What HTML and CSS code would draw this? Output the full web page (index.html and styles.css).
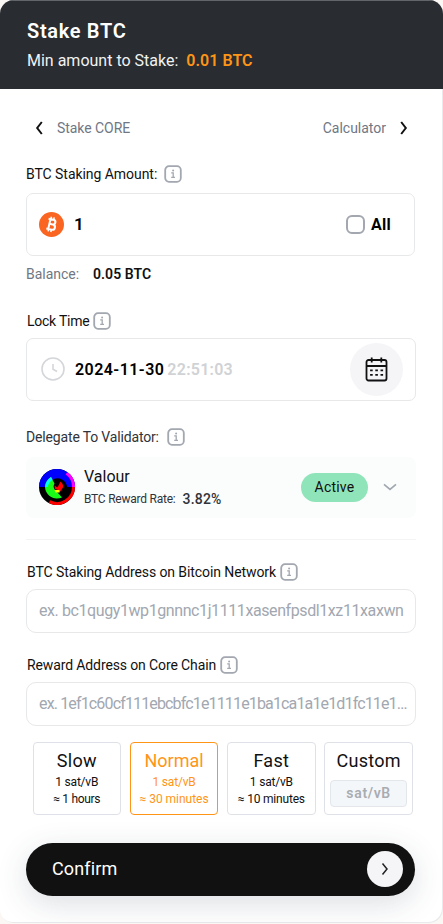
FILE: index.html
```
<!DOCTYPE html>
<html lang="en">
<head>
<meta charset="utf-8">
<title>Stake BTC</title>
<link rel="stylesheet" href="styles.css">
</head>
<body>
<svg class="sprite" aria-hidden="true">
  <symbol id="info" viewBox="0 0 18 18">
    <rect x="1.2" y="1.2" width="15.6" height="15.6" rx="3.8" fill="none" stroke="#a2a7b0" stroke-width="1.8"/>
    <path d="M7.2 7.8H9.2V12.2M7.2 12.3H11" fill="none" stroke="#a2a7b0" stroke-width="1.3"/>
    <circle cx="9.1" cy="5.4" r="1" fill="#a2a7b0"/>
  </symbol>
</svg>
<main class="card">
  <header class="head">
    <h1 class="title">Stake BTC</h1>
    <p class="min"><span>Min amount to Stake:</span><b class="min-value">0.01 BTC</b></p>
  </header>
  <div class="body">
    <nav class="nav">
      <a class="nav-link"><svg width="8" height="14" viewBox="0 0 8 14"><path d="M6.800 1 2.200 7l4.600 6" class="nav-arrow"/></svg><span class="nav-prev">Stake CORE</span></a>
      <a class="nav-link next"><span class="nav-next">Calculator</span><svg width="8" height="14" viewBox="0 0 8 14"><path d="M1.200 1 5.800 7l-4.600 6" class="nav-arrow"/></svg></a>
    </nav>

    <div class="label amount-label wide"><span>BTC Staking Amount:</span><svg class="info"><use href="#info"/></svg></div>
    <div class="box amount">
      <svg class="coin" viewBox="0 0 24 24">
        <circle cx="12" cy="12" r="12" fill="#fb6522"/>
        <g transform="rotate(13 12 12)" fill="none" stroke="#fff">
          <path d="M9.900 7.200V16.800M8 7.200H12.900a2.200 2.200 0 0 1 0 4.500H10M12.900 11.700H13.300a2.500 2.500 0 0 1 0 5.100H8" stroke-width="2"/>
          <path d="M10.300 4.800V7M13 4.800V7M10.300 17V19.200M13 17V19.200" stroke-width="1.500"/>
        </g>
      </svg>
      <b class="amount-value">1</b>
      <span class="check"></span>
      <b class="all">All</b>
    </div>
    <p class="balance"><span class="balance-name">Balance:</span><b class="balance-value">0.05 BTC</b></p>

    <div class="label lock-label"><span>Lock Time</span><svg class="info"><use href="#info"/></svg></div>
    <div class="box lock">
      <svg class="clock" viewBox="0 0 24 24"><circle cx="12" cy="12" r="11" /><path d="M12 7v5.200l4 2.300"/></svg>
      <b class="date">2024-11-30</b><b class="time">22:51:03</b>
      <span class="cal">
        <svg width="24" height="26" viewBox="0 0 24 26">
          <rect x="1.500" y="3" width="20" height="20.500" rx="2" class="ink"/>
          <path d="M1.500 9H21.500M6.700 .5V5.500M16.300 .5V5.500" class="ink"/>
          <path d="M5.100 13.300H7.700M10.300 13.300H12.900M15.500 13.300H18.100M5.100 17.800H7.700M10.300 17.800H12.900M15.500 17.800H18.100" class="ink"/>
        </svg>
      </span>
    </div>

    <div class="label val-label wide"><span>Delegate To Validator:</span><svg class="info"><use href="#info"/></svg></div>
    <div class="validator">
      <svg class="avatar" viewBox="0 0 36 36">
        <circle cx="18" cy="18" r="18" fill="#000"/>
        <path d="M0 18a18 18 0 0 1 36 0z" fill="#00f"/>
        <path d="M27.500 4.200A16.500 16.500 0 0 1 34.500 18" fill="none" stroke="#f0f" stroke-width="3"/>
        <path d="M34.500 18A16.500 16.500 0 0 1 10.500 32.700" fill="none" stroke="#f00" stroke-width="3"/>
        <path d="M14 10.500A9.500 9.500 0 0 1 28 18v4l-5 5h-9z" fill="#000"/>
        <path d="M12 8 15.500 14.500Q13.500 18 16 21L19 24 23 28.500A12 12 0 0 1 6 18Q6.500 11.500 12 8Z" fill="#17fb17"/>
        <path d="M12 8Q6.500 11.500 6 18H8.500Q10 13 13.300 10.500Z" fill="#0ff"/>
        <path d="M15.500 16.500 18.500 18.500 21.500 12.500Q26 16.500 23 20L20.500 23.500 19 21 16 20Z" fill="#f00"/>
        <path d="M15.500 21H20.500V23.500H16.500Z" fill="#ff0"/>
      </svg>
      <div class="val-text">
        <div class="val-name">Valour</div>
        <div class="val-rate"><span>BTC Reward Rate:</span><b>3.82%</b></div>
      </div>
      <span class="active">Active</span>
      <svg class="chev" viewBox="0 0 14 8"><path d="M1 1.300 7 6.300 13 1.300"/></svg>
    </div>
    <hr class="rule">

    <div class="label addr-label"><span>BTC Staking Address on Bitcoin Network</span><svg class="info"><use href="#info"/></svg></div>
    <div class="input"><span class="ph-btc">ex. bc1qugy1wp1gnnnc1j1111xasenfpsdl1xz11xaxwn</span></div>
    <div class="label reward-label"><span>Reward Address on Core Chain</span><svg class="info"><use href="#info"/></svg></div>
    <div class="input"><span class="ph-core">ex. 1ef1c60cf111ebcbfc1e1111e1ba1ca1a1e1d1fc11e1…</span></div>

    <div class="fees">
      <div class="fee slow"><div class="fee-name">Slow</div><div class="fee-line rate">1 sat/vB</div><div class="fee-line eta">≈ 1 hours</div></div>
      <div class="fee on"><div class="fee-name">Normal</div><div class="fee-line rate">1 sat/vB</div><div class="fee-line eta">≈ 30 minutes</div></div>
      <div class="fee fast"><div class="fee-name">Fast</div><div class="fee-line rate">1 sat/vB</div><div class="fee-line eta">≈ 10 minutes</div></div>
      <div class="fee custom"><div class="fee-name">Custom</div><div class="custom-rate">sat/vB</div></div>
    </div>

    <div class="confirm"><span>Confirm</span><span class="go"><svg width="8" height="14" viewBox="0 0 8 14"><path d="M1.500 1.500 6 7l-4.500 5.500"/></svg></span></div>
  </div>
</main>
</body>
</html>
```
FILE: styles.css
```
* { box-sizing: border-box; }
body { margin: 0; background: #fbf7f5; font: 14px/20px Roboto, "Liberation Sans", sans-serif; color: #111; }
h1, p { margin: 0; }
b { font-weight: 600; }
svg { display: block; flex: none; }
.sprite { position: absolute; width: 0; height: 0; }
.card { width: 443px; height: 923px; background: #fff; border-radius: 14px; overflow: hidden; box-shadow: inset -1px -1px 0 #e9eaec; }
.head { height: 89px; padding: 18px 27px 0; background: #292c31; border-top: 1px solid #62666a; color: #fff; }
.title { font-size: 20px; line-height: 24px; font-weight: 600; letter-spacing: .68px; }
.min { display: flex; gap: 8px; margin-top: 8px; font-size: 16px; line-height: 20px; color: #f1f2f2; }
.min-value { color: #ff9517; letter-spacing: .03px; }
.body { padding: 0 27px 0 26px; }
.nav { display: flex; justify-content: space-between; height: 20px; margin: 29px 8px 0 9px; color: #6f7784; }
.nav-link { display: flex; align-items: center; gap: 14px; }
.nav-prev { letter-spacing: -.06px; }
.nav-next { letter-spacing: -.01px; }
.nav-arrow { fill: none; stroke: #111; stroke-width: 2; }
.label { display: flex; align-items: center; gap: 4px; height: 20px; padding-left: 1px; white-space: nowrap; }
.wide { gap: 7px; padding-left: 0; }
.info { width: 18px; height: 18px; }
.box { display: flex; align-items: center; height: 63px; border: 1px solid #e7e8ea; border-radius: 7px; font-size: 16px; }
.amount-label { margin-top: 26px; letter-spacing: -.05px; }
.amount { width: 389px; margin-top: 9px; padding: 0 23px 0 12px; color: #000; }
.coin { width: 25px; height: 25px; margin-bottom: 1px; }
.amount-value { margin: 0 0 1px 10px; font-size: 17px; }
.check { width: 19px; height: 19px; margin-left: auto; border: 2px solid #a2a7b0; border-radius: 6px; }
.all { margin-left: 6px; font-weight: 700; letter-spacing: .3px; }
.balance { display: flex; height: 20px; margin-top: 8px; gap: 14px; }
.balance-name { color: #6f7784; letter-spacing: -.03px; }
.balance-value { letter-spacing: .06px; }
.lock-label { margin-top: 27px; letter-spacing: -.25px; }
.lock { width: 390px; margin-top: 7px; padding: 0 12px 0 14px; color: #000; }
.clock { width: 24px; height: 24px; margin-bottom: 1px; fill: none; stroke: #d4d6da; stroke-width: 1.6; }
.date { margin-left: 10px; letter-spacing: .45px; }
.time { margin-left: 3px; color: #d0d2d5; letter-spacing: .25px; }
.cal { display: grid; place-items: center; width: 53px; height: 53px; margin-left: auto; border-radius: 50%; background: #f5f5f8; }
.ink { fill: none; stroke: #111; stroke-width: 1.8; }
.val-label { margin-top: 26px; color: #30343a; letter-spacing: -.16px; }
.val-label .info { margin-left: 1px; }
.validator { display: flex; align-items: center; width: 390px; height: 61px; margin-top: 10px; padding: 0 19px 0 13px; border-radius: 8px; background: #fafdfc; }
.avatar { width: 36px; height: 36px; margin-bottom: 2px; }
.val-text { margin-left: 9px; }
.val-name { font-size: 16px; line-height: 20px; }
.val-rate { display: flex; gap: 7px; margin-top: 2px; font-size: 12px; line-height: 20px; letter-spacing: -.23px; color: #30343a; }
.val-rate b { font-size: 14px; font-weight: 500; letter-spacing: .2px; }
.active { width: 67px; height: 29px; margin: 0 0 1px auto; border-radius: 15px; background: #90e4ba; line-height: 29px; text-align: center; letter-spacing: .2px; }
.chev { width: 14px; height: 8px; margin: 0 0 2px 15px; fill: none; stroke: #a2a7b0; stroke-width: 1.7; }
.rule { width: 390px; height: 1px; margin: 21px 0 0; border: 0; background: #f3f4f5; }
.addr-label { margin-top: 22px; letter-spacing: -.09px; }
.input { display: flex; align-items: center; width: 390px; height: 44px; margin-top: 7px; padding-left: 12px; border: 1px solid #e7e8ea; border-radius: 10px; font-size: 16px; color: #a2a7b0; white-space: nowrap; }
.ph-btc { letter-spacing: -.41px; }
.ph-core { letter-spacing: -.85px; }
.reward-label { margin-top: 22px; letter-spacing: -.12px; }
.fees { display: grid; grid-template-columns: repeat(4, 88.5px); gap: 8.800px; margin: 16px 0 0 6.500px; }
.fee { height: 73px; padding-top: 6px; border: 1px solid #dfe1e8; border-radius: 4px; text-align: center; }
.fee-name { font-size: 18px; line-height: 24px; letter-spacing: .3px; }
.fee-line { font-size: 12px; line-height: 17px; letter-spacing: -.2px; }
.rate { margin-top: 1px; }
.on { border-color: #ff9517; color: #ff9517; }
.on .fee-name, .on .eta { letter-spacing: -.03px; }
.slow .eta { letter-spacing: -.31px; }
.custom-rate { height: 27px; margin: 7px 5px 0; border: 1px solid #e3e6ea; border-radius: 4px; background: #f4f7fa; color: #a9acb1; font-weight: 600; line-height: 25px; letter-spacing: .65px; }
.confirm { display: flex; align-items: center; justify-content: space-between; width: 389px; height: 53px; margin-top: 28px; padding: 0 12px 1px 26px; border-radius: 27px; background: #111; color: #fff; font-size: 18px; letter-spacing: .13px; box-shadow: 0 8px 30px rgba(50, 65, 90, .17); }
.go { display: grid; place-items: center; width: 36px; height: 36px; border-radius: 50%; background: #f5f5f8; }
.go path { fill: none; stroke: #222; stroke-width: 1.5; }
```
